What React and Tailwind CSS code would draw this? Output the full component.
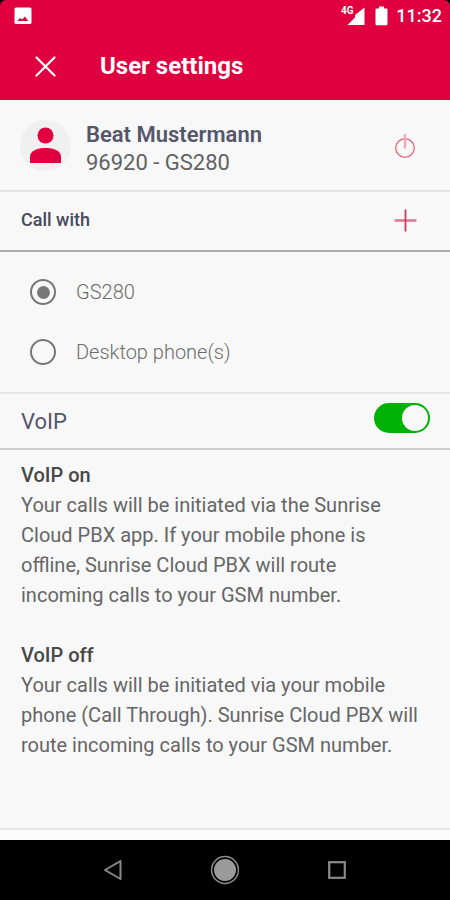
import React, { useState } from 'react';

const App = () => {
  const [device, setDevice] = useState('gs280');
  const [voip, setVoip] = useState(true);

  return (
    <div className="flex min-h-screen flex-col bg-black font-['Roboto','Liberation_Sans',sans-serif]">
      {/* Header */}
      <header className="rounded-t-md bg-[#e0003f] text-white">
        <div className="flex h-8 items-center justify-between pr-2 pl-3.5">
          <svg viewBox="0 0 18 18" className="h-[18px] w-[18px]" aria-hidden="true">
            <rect x="0.5" y="0.5" width="17" height="16.5" rx="1.5" fill="#fff" />
            <path d="M3.3 14 6 11l2 1.5 3-3 3.2 4.5z" fill="#e0003f" />
          </svg>
          <div className="flex items-center">
            <svg viewBox="0 0 24 22" className="mr-2.5 h-[22px] w-6" aria-hidden="true">
              <path d="M23.500 2.500v17.500H6.500l7.500-7.500V10z" fill="#fff" />
              <text x="0" y="9" fontSize="10" fontWeight="700" fill="#fff">4G</text>
            </svg>
            <svg viewBox="0 0 13 20" className="mr-2 h-5 w-[13px]" aria-hidden="true">
              <path d="M4 0.5h5v2h2.500q1 0 1 1V18q0 1.2-1 1.2h-10q-1 0-1-1.2V3.5q0-1 1-1H4z" fill="#fff" />
            </svg>
            <span className="text-lg font-medium">11:32</span>
          </div>
        </div>
        <div className="flex h-[68px] items-center pl-[35px]">
          <button type="button" aria-label="Close" className="mr-11">
            <svg viewBox="0 0 21 21" className="h-[21px] w-[21px]" fill="none" stroke="#fff" strokeWidth="2.2" strokeLinecap="round">
              <path d="M1.5 1.5 19.5 19.5M19.5 1.5 1.5 19.5" />
            </svg>
          </button>
          <h1 className="text-2xl font-bold">User settings</h1>
        </div>
      </header>

      {/* Main Content */}
      <main className="flex-1 bg-[#f8f8f8]">
        <section className="flex h-[92px] items-center border-b-2 border-[#e3e3e3] pr-[34px] pl-5">
          <svg viewBox="0 0 51 51" className="mr-[15px] h-[51px] w-[51px]" aria-hidden="true">
            <circle cx="25.5" cy="25.5" r="25.5" fill="#f0f0f0" />
            <circle cx="25.5" cy="15.5" r="8" fill="#e0003f" />
            <path d="M10 43v-6.5C10 30.5 18 28 25.5 28S41 30.5 41 36.5V43z" fill="#e0003f" />
          </svg>
          <div className="flex-1 pt-2 text-[22px] leading-7">
            <h2 className="font-semibold text-[#55566a]">Beat Mustermann</h2>
            <p className="text-[#626262]">96920 - GS280</p>
          </div>
          <button type="button" aria-label="Log out">
            <svg viewBox="0 0 22 26" className="h-[26px] w-[22px]" fill="none">
              <circle cx="11" cy="16" r="9.3" stroke="#e2667f" strokeWidth="1.3" />
              <path d="M11 2v14.5" stroke="#f0aab6" strokeWidth="2.5" />
            </svg>
          </button>
        </section>

        <section className="flex h-[60px] items-center justify-between border-b-2 border-[#acacac] pr-[33px] pb-0.5 pl-[21px]">
          <h2 className="text-lg font-medium text-[#48485c]">Call with</h2>
          <button type="button" aria-label="Add device">
            <svg viewBox="0 0 23 23" className="h-[23px] w-[23px]" fill="none">
              <path d="M0.5 11.5h22" stroke="#e0758a" strokeWidth="2.5" />
              <path d="M11.5 0.5v22" stroke="#d2365a" strokeWidth="1.8" />
            </svg>
          </button>
        </section>

        <fieldset aria-label="Call with" className="border-b-2 border-[#e6e6e6] px-[30px] py-[10px]">
          <label className="flex h-15 items-center gap-5">
            <input
              type="radio"
              name="device"
              checked={device === 'gs280'}
              onChange={() => setDevice('gs280')}
              className="grid h-[26px] w-[26px] appearance-none place-items-center rounded-full border-2 border-[#777] before:h-[13px] before:w-[13px] before:rounded-full checked:before:bg-[#777]"
            />
            <span className="text-xl font-light text-[#6c6c6c]">GS280</span>
          </label>
          <label className="flex h-15 items-center gap-5">
            <input
              type="radio"
              name="device"
              checked={device === 'desktop'}
              onChange={() => setDevice('desktop')}
              className="grid h-[26px] w-[26px] appearance-none place-items-center rounded-full border-2 border-[#777] before:h-[13px] before:w-[13px] before:rounded-full checked:before:bg-[#777]"
            />
            <span className="text-xl font-light text-[#6c6c6c]">Desktop phone(s)</span>
          </label>
        </fieldset>

        <section className="flex h-14 items-center justify-between border-b-2 border-[#cdcdcd] pr-5 pl-[21px]">
          <label htmlFor="voip" className="text-[22px] text-[#55566a]">VoIP</label>
          <input
            id="voip"
            type="checkbox"
            role="switch"
            checked={voip}
            onChange={() => setVoip(!voip)}
            className="mb-1.5 flex h-[30px] w-14 appearance-none items-center rounded-full bg-[#bbb] px-0.5 before:h-[26px] before:w-[26px] before:rounded-full before:bg-[#f8f8f8] checked:justify-end checked:bg-[#00b106]"
          />
        </section>

        <section className="pt-2.5 pr-[29px] pl-[21px] text-xl leading-[30px] text-[#666]">
          <h3 className="font-medium text-[#484848]">VoIP on</h3>
          <p>
            Your calls will be initiated via the Sunrise Cloud PBX app. If your mobile phone is
            offline, Sunrise Cloud PBX will route incoming calls to your GSM number.
          </p>
          <h3 className="mt-[30px] font-medium text-[#484848]">VoIP off</h3>
          <p>
            Your calls will be initiated via your mobile phone (Call Through). Sunrise Cloud PBX will
            route incoming calls to your GSM number.
          </p>
        </section>
      </main>
      <div className="h-3 border-t-2 border-[#e8e8e8] bg-[#fcfcfc]" />

      {/* Navigation */}
      <nav className="grid h-15 grid-cols-3 items-center justify-items-center bg-black px-[57px]">
        <button type="button" aria-label="Back">
          <svg viewBox="0 0 20 22" className="h-[22px] w-5" fill="none" stroke="#8a8a8a" strokeWidth="2" strokeLinejoin="round">
            <path d="M2 11 17.5 2v18z" />
          </svg>
        </button>
        <button type="button" aria-label="Home">
          <svg viewBox="0 0 30 30" className="h-[30px] w-[30px]">
            <circle cx="15" cy="15" r="13.4" fill="none" stroke="#8e8e8e" strokeWidth="1.5" />
            <circle cx="15" cy="15" r="11" fill="#9b9b9b" />
          </svg>
        </button>
        <button type="button" aria-label="Recent apps">
          <svg viewBox="0 0 18 18" className="h-[18px] w-[18px]" fill="none" stroke="#8a8a8a" strokeWidth="2.2">
            <rect x="1.2" y="1.2" width="15.6" height="15.6" />
          </svg>
        </button>
      </nav>
    </div>
  );
};

export default App;
